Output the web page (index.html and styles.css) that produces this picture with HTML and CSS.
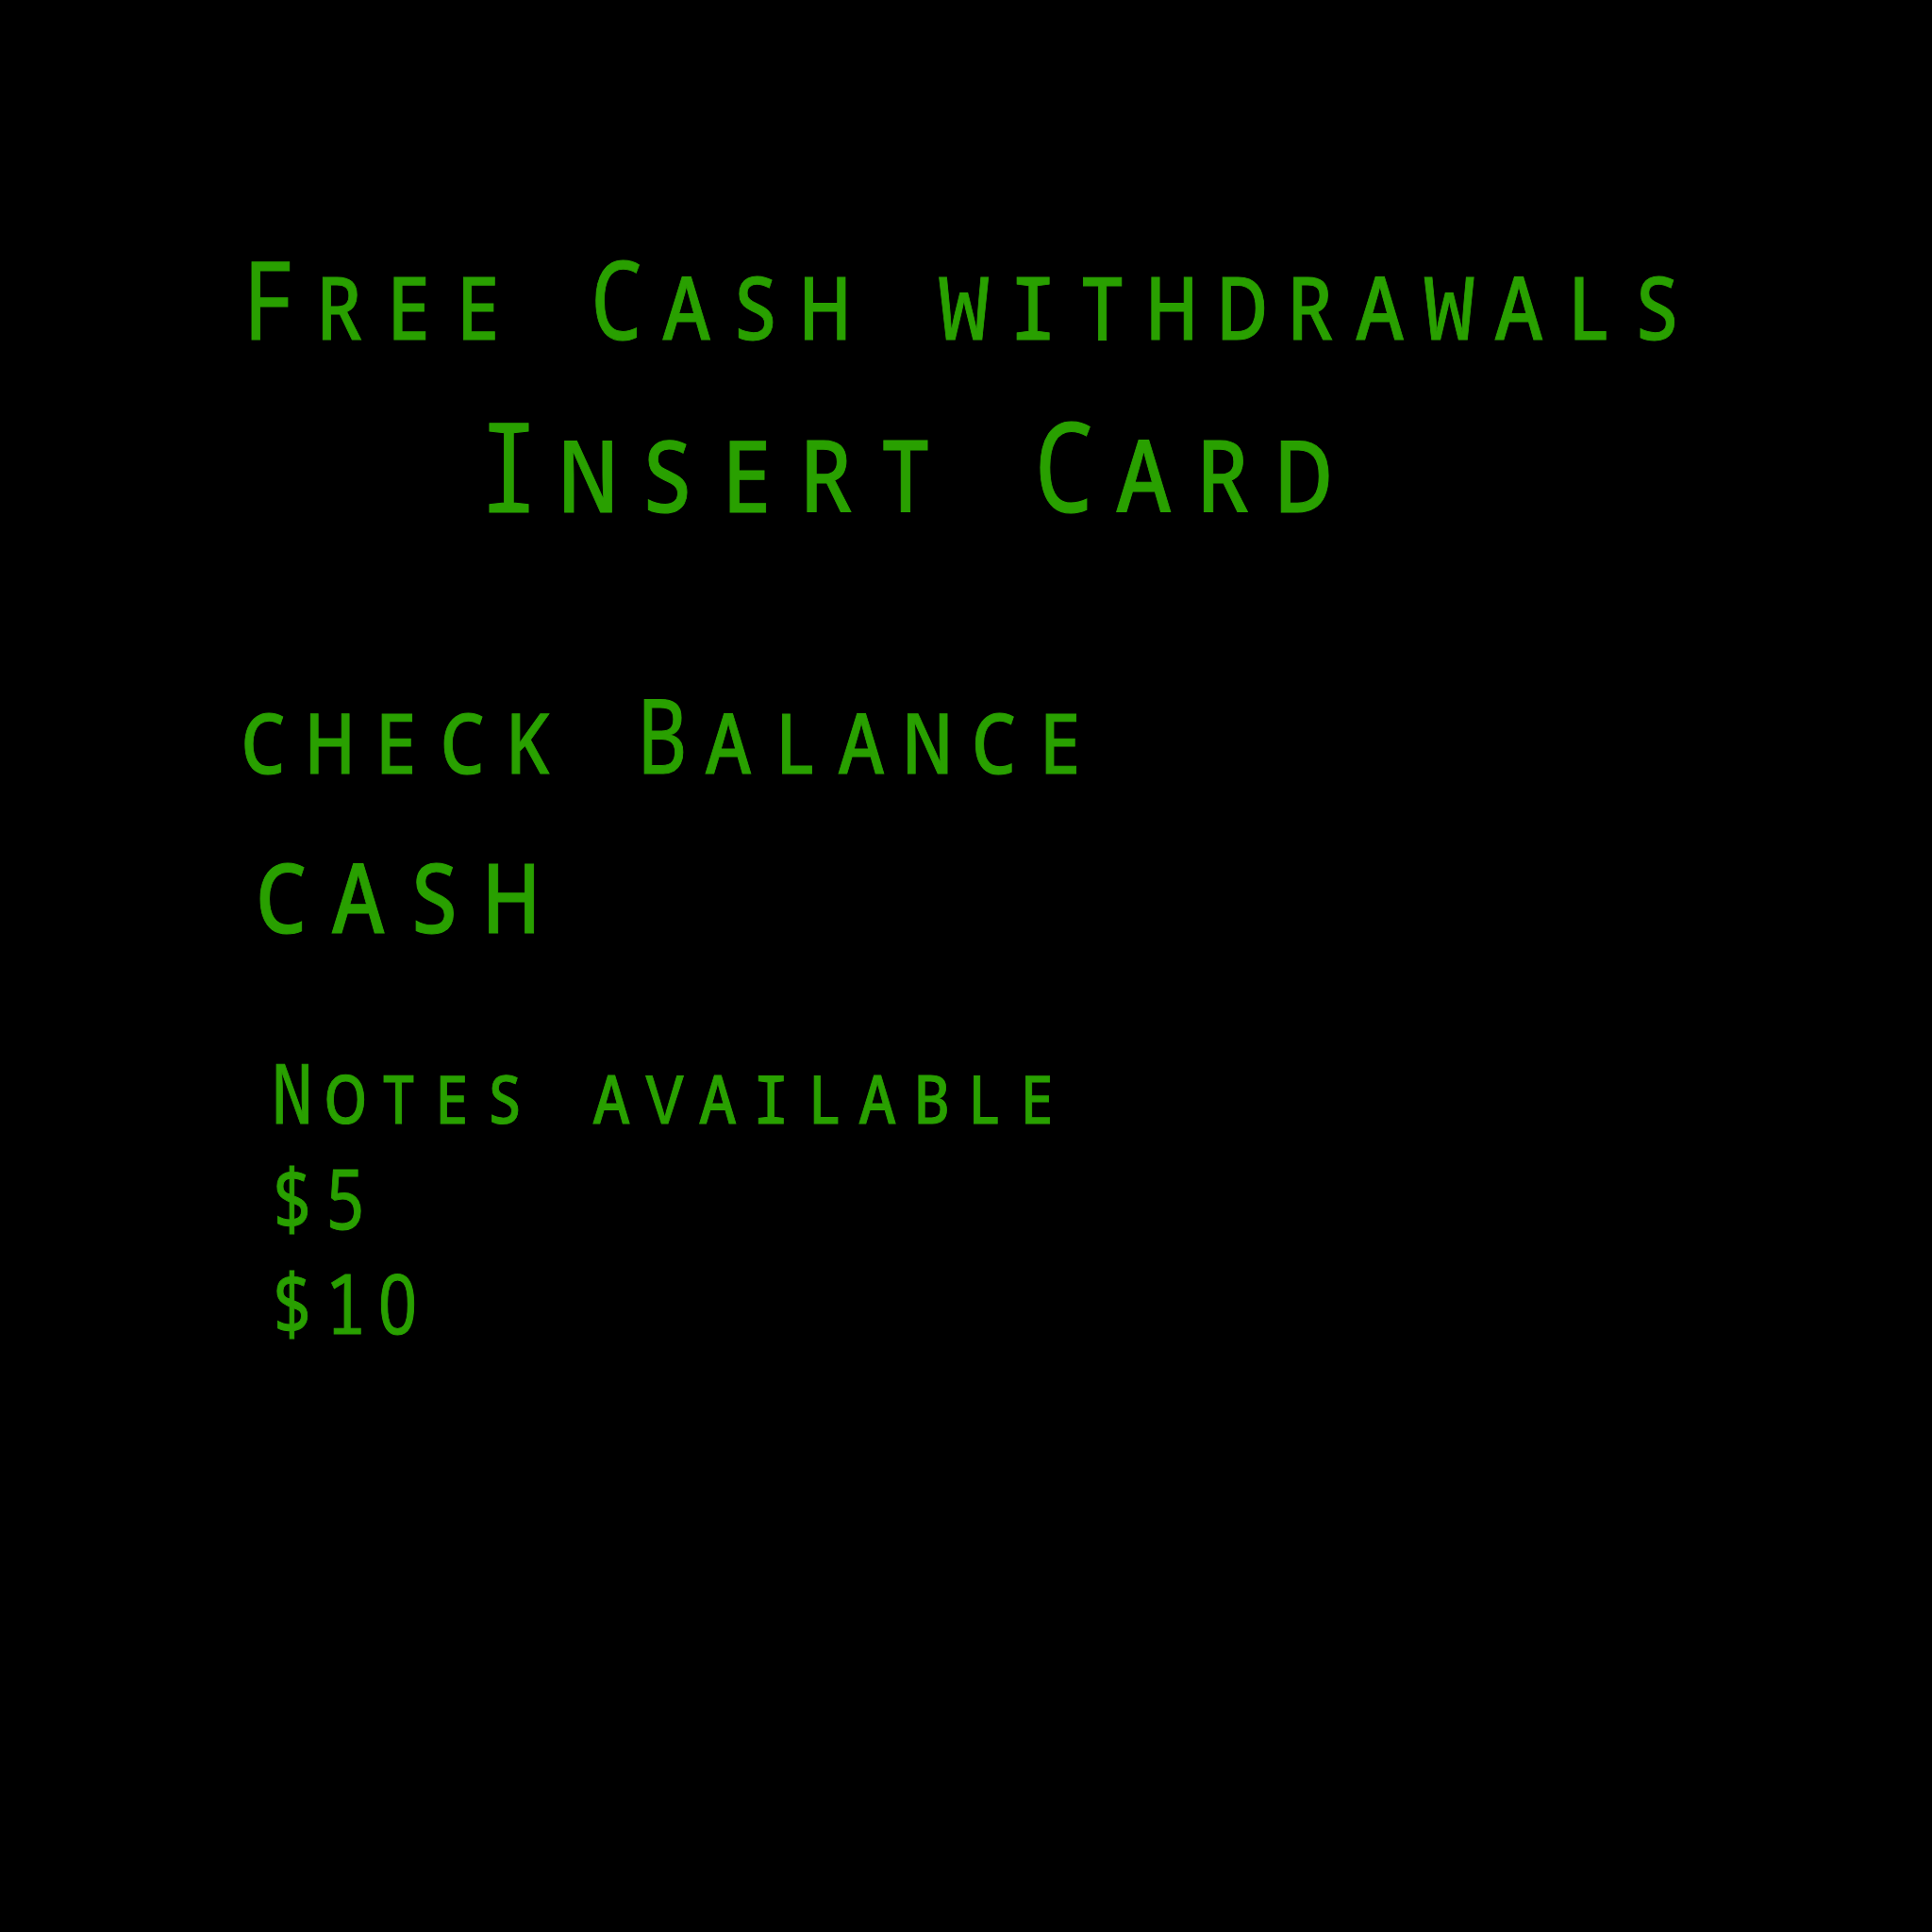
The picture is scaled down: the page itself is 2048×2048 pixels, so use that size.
FILE: index.html
```html
<!DOCTYPE html>
<html>
<head>
<meta charset="utf-8">
<title>ATM</title>
<link rel="stylesheet" href="styles.css">
</head>
<body>
<main class="screen">
  <h1 class="line title">Free Cash withdrawals</h1>
  <h2 class="line insert">Insert Card</h2>
  <div class="menu">
    <div class="line check">check Balance</div>
    <div class="line cash">cash</div>
  </div>
  <div class="notes">
    <div class="line">Notes available</div>
    <div class="line">$5</div>
    <div class="line">$1<span class="zero">0</span></div>
  </div>
</main>
</body>
</html>
```
FILE: styles.css
```css
html, body {
  margin: 0;
  background: #000;
}
.screen {
  min-height: 2048px;
  box-sizing: border-box;
  padding-top: 258px;
  color: #29a000;
  font-family: "Noto Sans Mono", "DejaVu Sans Mono", monospace;
  font-variant: small-caps;
  line-height: 1;
}
.line {
  margin: 0;
  font-weight: normal;
  letter-spacing: 0.177em;
  white-space: nowrap;
  -webkit-text-stroke: 1px currentColor;
  transform: scaleX(0.82);
  transform-origin: 0 0;
}
.title {
  font-size: 115.4px;
  margin-left: 258px;
}
.insert {
  font-size: 132px;
  margin-left: 507px;
  margin-top: 53px;
}
.menu {
  margin-top: 164px;
}
.check {
  font-size: 110.5px;
  margin-left: 252px;
}
.cash {
  font-size: 127.5px;
  margin-left: 267px;
  margin-top: 43px;
}
.notes {
  font-size: 88.5px;
  line-height: 111.5px;
  margin-left: 288px;
  margin-top: 97.6px;
}
.zero {
  font-family: "Noto Sans", sans-serif;
}
```
